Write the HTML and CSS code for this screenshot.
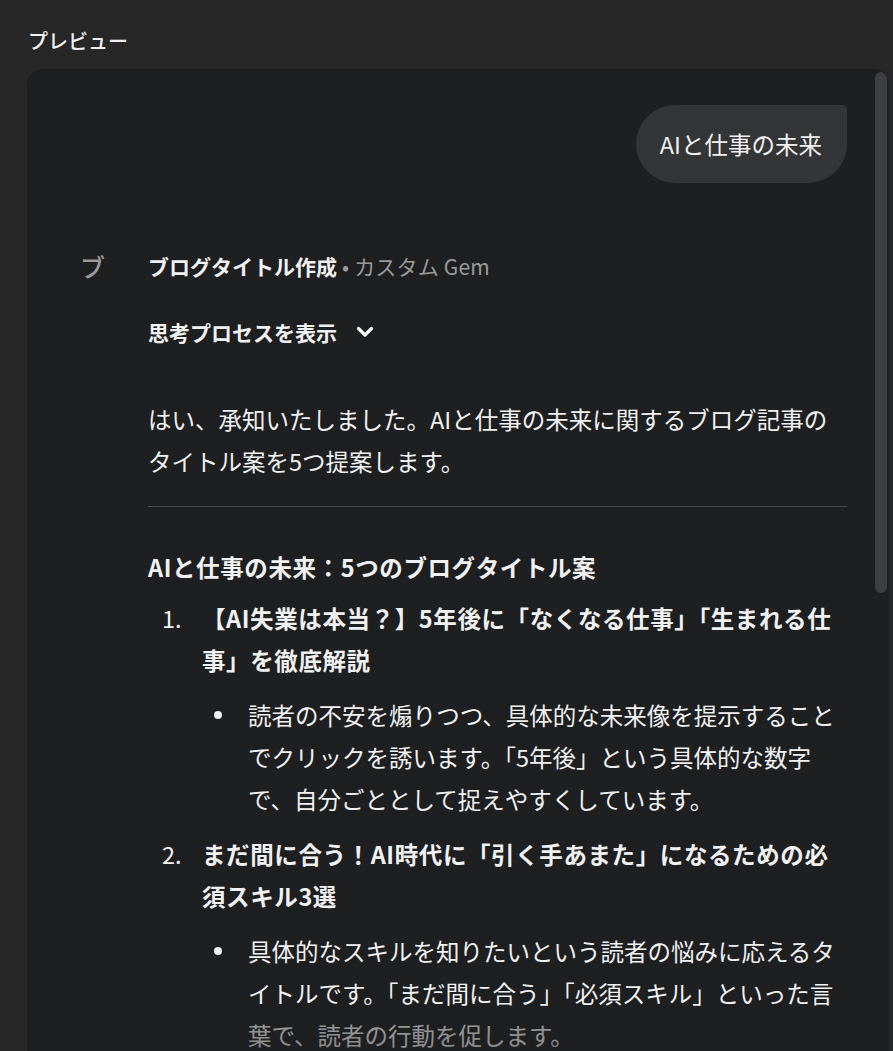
FILE: index.html
```html
<!DOCTYPE html>
<html lang="ja">
<head>
<meta charset="UTF-8">
<meta name="viewport" content="width=device-width,initial-scale=1.0">
<title>プレビュー</title>
<link rel="stylesheet" href="styles.css">
</head>
<body>
    <div class="page">
        <div class="title">プレビュー</div>
        <div class="panel">
            <!--ユーザーの入力-->
            <div class="user-row">
                <div class="bubble">AIと仕事の未来</div>
            </div>
            <!--Gemの返答-->
            <div class="reply">
                <div class="avatar">ブ</div>
                <div class="reply-body">
                    <div class="gem-name"><b>ブログタイトル作成</b><span class="gem-sub"> • カスタム Gem</span></div>
                    <div class="think">思考プロセスを表示
                        <svg width="18" height="12" viewBox="0 0 18 12"><path d="M2.5 2.5l6.5 6.5 6.5-6.5" fill="none" stroke="#fff" stroke-width="3.2" stroke-linecap="round" stroke-linejoin="round"/></svg>
                    </div>
                    <p class="lead">はい、承知いたしました。AIと仕事の未来に関するブログ記事のタイトル案を5つ提案します。</p>
                    <hr class="rule">
                    <h3 class="heading">AIと仕事の未来：5つのブログタイトル案</h3>
                    <ol class="ideas">
                        <li>
                            <div class="idea-title"><span class="num">1.</span><b>【AI失業は本当？】5年後に「なくなる仕事」「生まれる仕事」を徹底解説</b></div>
                            <ul class="notes">
                                <li><span class="dot"></span><span>読者の不安を煽りつつ、具体的な未来像を提示することでクリックを誘います。「5年後」という具体的な数字で、自分ごととして捉えやすくしています。</span></li>
                            </ul>
                        </li>
                        <li>
                            <div class="idea-title"><span class="num">2.</span><b>まだ間に合う！AI時代に「引く手あまた」になるための必須スキル3選</b></div>
                            <ul class="notes">
                                <li><span class="dot"></span><span>具体的なスキルを知りたいという読者の悩みに応えるタイトルです。「まだ間に合う」「必須スキル」といった言葉で、読者の行動を促します。</span></li>
                            </ul>
                        </li>
                    </ol>
                </div>
            </div>
            <div class="scroll-thumb"></div>
        </div>
    </div>
</body>
</html>
```
FILE: styles.css
```css
/*初期化*/
*{
 margin:0;
 padding:0;
 box-sizing:border-box;
 list-style:none;
}
body{
 background:#272727;
 color:#f1f1f1;
 font-family:"Noto Sans CJK JP","Noto Sans",Roboto,sans-serif;
 overflow:hidden;
}
.page{
 padding:27px 4px 0 27px;
 height:1051px;
 display:flex;
 flex-direction:column;
}
.title{
 font-size:20px;
 line-height:28px;
 font-weight:500;
 padding-left:1px;
 margin-bottom:14px;
}
/*プレビュー枠*/
.panel{
 flex:1;
 background:#1e1f21;
 border-radius:16px 16px 0 0;
 padding:36px 42px 0 53px;
 position:relative;
 overflow:hidden;
}
.panel::after{
 content:"";
 position:absolute;
 left:0;
 right:0;
 bottom:0;
 height:38px;
 background:linear-gradient(rgba(30,31,33,0.4),rgba(30,31,33,0.5));
}
.scroll-thumb{
 position:absolute;
 right:2px;
 top:3px;
 width:12px;
 height:521px;
 border-radius:6px;
 background:#3d3e42;
}
.user-row{
 display:flex;
 justify-content:flex-end;
}
.bubble{
 background:#333537;
 font-size:23.5px;
 line-height:40px;
 padding:19px 25px 19px 24px;
 border-radius:39px 5px 39px 39px;
}
/*返答*/
.reply{
 display:flex;
 margin-top:68px;
}
.avatar{
 width:68px;
 flex:none;
 color:#9b9b9b;
 font-size:25px;
 line-height:30px;
 font-weight:500;
}
.reply-body{
 flex:1;
 font-size:23.5px;
}
.gem-name{
 font-size:21px;
 line-height:30px;
}
.gem-sub{
 color:#9a9a9a;
 letter-spacing:0.2px;
}
.think{
 margin-top:36px;
 font-size:21px;
 line-height:30px;
 font-weight:700;
 display:flex;
 align-items:center;
 gap:19px;
}
.lead{
 margin-top:51px;
 line-height:42px;
}
.rule{
 border:none;
 border-top:1px solid #4a4a4c;
 margin-top:24px;
}
.heading{
 margin-top:39px;
 font-size:23.5px;
 line-height:42px;
 letter-spacing:0.6px;
}
.ideas{
 margin-top:9px;
}
.ideas > li + li{
 margin-top:13px;
}
.idea-title{
 display:flex;
 line-height:42px;
}
.idea-title b{
 letter-spacing:0.6px;
}
.num{
 width:54px;
 flex:none;
 padding-left:14px;
}
.notes{
 margin-top:13px;
 padding-left:54px;
}
.notes li{
 display:flex;
 line-height:42px;
}
.dot{
 width:8px;
 height:8px;
 border-radius:50%;
 background:#f1f1f1;
 flex:none;
 margin:17px 26px 0 12px;
}
```
